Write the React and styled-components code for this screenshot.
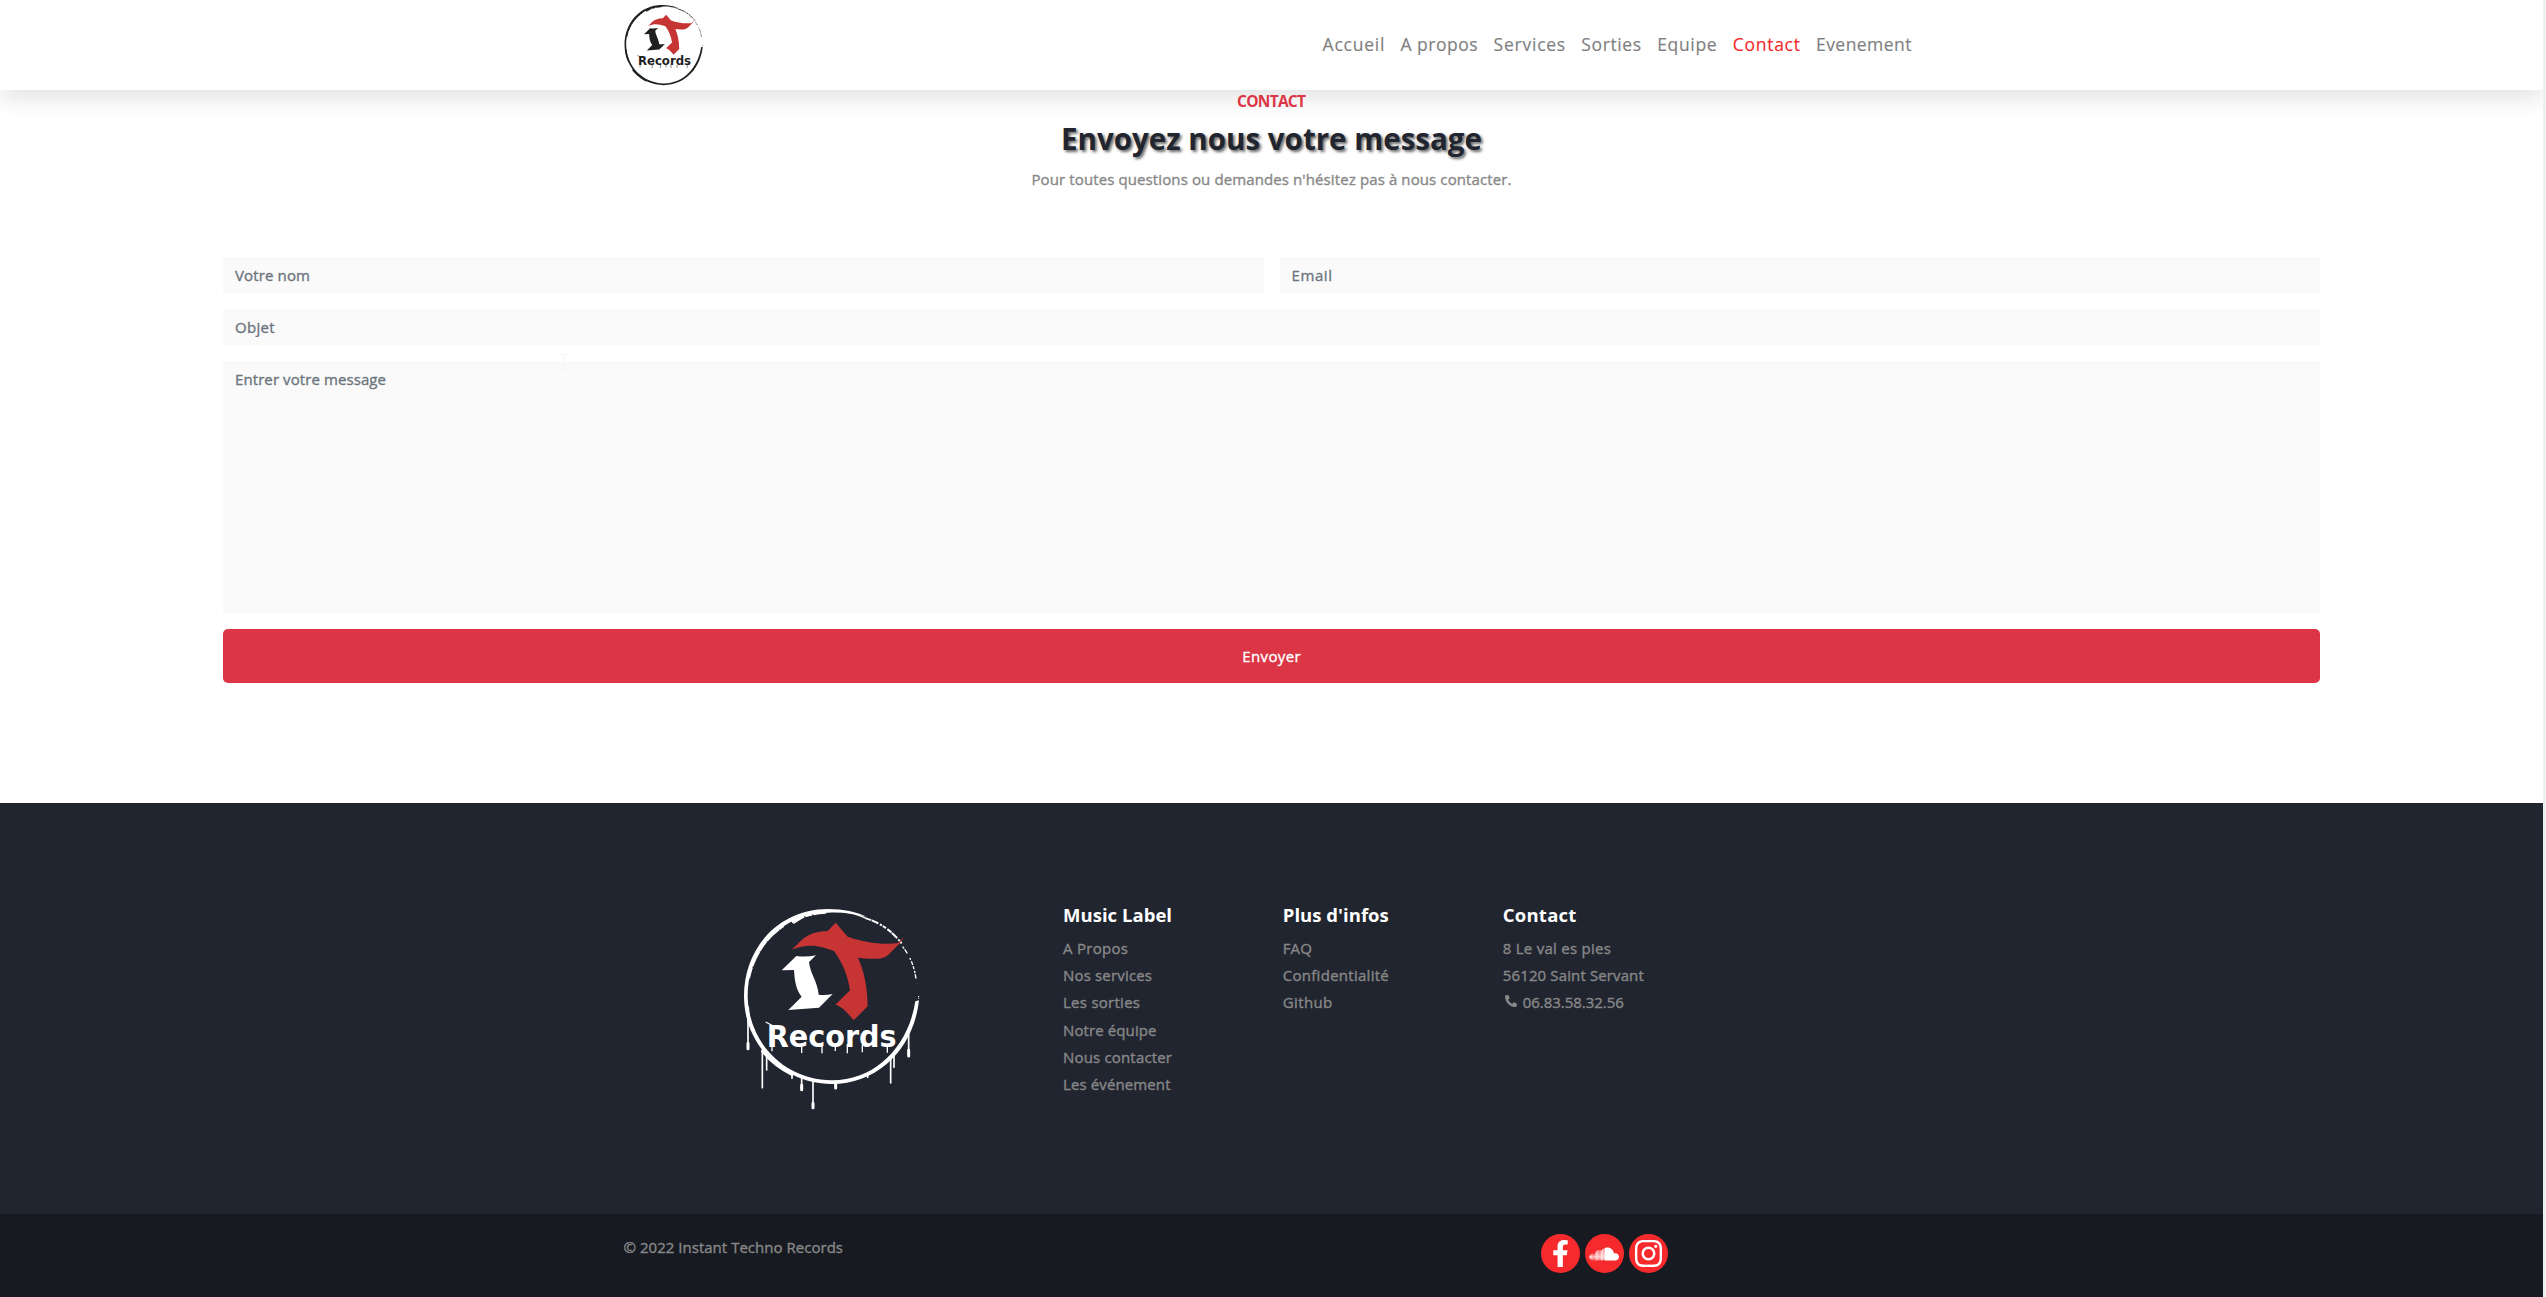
import React from 'react';
import styled, { createGlobalStyle } from 'styled-components';
import { FaFacebookF, FaSoundcloud, FaInstagram, FaPhoneAlt } from 'react-icons/fa';

const FAMILY = '"Open Sans", "Noto Sans", sans-serif';

const GlobalStyle = createGlobalStyle`
  * { box-sizing: border-box; }
  html, body { margin: 0; padding: 0; overflow: hidden; background: #fff; }
  body { font-family: ${FAMILY}; font-size: 15px; line-height: 24px; color: #212529; }
  ul, h2, h3, p { margin: 0; padding: 0; list-style: none; }
  a { color: inherit; text-decoration: none; }
`;

/* Letter spacing that makes a text run exactly as long as its design width. */
const pen = document.createElement('canvas').getContext('2d');
function tracking(text, width, size, weight = 500) {
  pen.font = `${weight} ${size}px ${FAMILY}`;
  return (width - pen.measureText(text).width) / (text.length - 1);
}

const Run = styled.span`
  font-size: ${(p) => p.$size}px;
  font-weight: ${(p) => p.$weight};
  margin-right: ${(p) => -p.$track}px;
  letter-spacing: ${(p) => p.$track}px;
  white-space: nowrap;
  -webkit-text-stroke: ${(p) => (p.$weight === 500 ? '0.35px' : p.$weight === 400 ? '0.15px' : '0')};
`;

function Text({ children, width, size = 15, weight = 500 }) {
  return (
    <Run $size={size} $weight={weight} $track={tracking(children, width, size, weight)}>
      {children}
    </Run>
  );
}

const Screen = styled.div`
  display: flex;
  width: 100%;
  height: 1297px;
  overflow: hidden;
`;
const Page = styled.div`
  flex: 1;
  display: flex;
  flex-direction: column;
`;
const ScrollTrack = styled.div`
  width: 3px;
  background: #f0f0f0;
`;
const Container = styled.div`
  width: 1296px;
  margin: 0 auto;
  display: flex;
`;

const Header = styled.header`
  height: 90px;
  background: #fff;
  box-shadow: 0 10px 20px rgba(0, 0, 0, 0.1);
  flex: none;
`;
const HeaderInner = styled(Container)`
  height: 90px;
  align-items: center;
  justify-content: space-between;
`;
const Nav = styled.nav`
  display: flex;
  padding-bottom: 2px;
`;
const NavLink = styled.a`
  padding: 0 8px;
  color: ${(p) => (p.$active ? '#f62a2d' : '#7f7f7f')};
`;

const Main = styled.main`
  height: 713px;
  padding: 0 223px;
  flex: none;
`;
const Intro = styled.div`
  display: flex;
  flex-direction: column;
  align-items: center;
  height: 167px;
`;
const Eyebrow = styled.div`
  color: #dc3545;
  height: 24px;
  line-height: 23px;
`;
const Title = styled.h2`
  margin-top: 6px;
  line-height: 38px;
  color: #212530;
  text-shadow: 2px 2px 3px rgba(0, 0, 0, 0.6);
`;
const Lead = styled.p`
  margin-top: 6px;
  color: #888;
`;
const Form = styled.form`
  display: flex;
  flex-direction: column;
  gap: 16px;
`;
const FieldRow = styled.div`
  display: flex;
  gap: 16px;
`;
const Field = styled.input`
  min-width: 0;
  width: 100%;
  height: ${(p) => (p.$area ? '252px' : '36px')};
  flex: ${(p) => (p.$area ? 'none' : '1 0 36px')};
  padding: ${(p) => (p.$area ? '6px 12px' : '0 12px')};
  border: 0;
  border-radius: 0;
  outline: none;
  resize: none;
  background: #fafafa;
  font: 500 15px/24px ${FAMILY};
  letter-spacing: ${(p) => p.$track}px;
  -webkit-text-stroke: 0.35px;
  display: block;
  &::placeholder { color: #6c757d; opacity: 1; }
`;
const Submit = styled.button`
  height: 54px;
  border: 0;
  border-radius: 5px;
  background: #dc3545;
  color: #fff;
  font-family: inherit;
`;
const Caret = styled.svg`
  position: absolute;
  left: 560px;
  top: 354px;
`;

const FooterTop = styled.footer`
  height: 411px;
  flex: none;
  background: #212530;
`;
const Columns = styled.div`
  width: 1296px;
  margin: 0 auto;
  padding-top: 87px;
  display: grid;
  grid-template-columns: 439.5px 219.8px 220px 220px;
`;
const LogoCell = styled.div`
  padding-left: 96.5px;
  height: 240px;
`;
const ColumnTitle = styled.h3`
  margin-top: 13px;
  color: #fff;
  line-height: 24px;
`;
const LinkList = styled.ul`
  margin-top: 8px;
  color: #888;
`;
const LinkItem = styled.li`
  height: 27.2px;
  line-height: 27.2px;
  display: flex;
`;
const PhoneIcon = styled(FaPhoneAlt)`
  width: 12px;
  height: 12px;
  margin: 6px 6px 0 2px;
  transform: scaleX(1);
`;

const FooterBottom = styled.div`
  flex: 1;
  background: #171a21;
`;
const BottomInner = styled(Container)`
  justify-content: space-between;
  padding-right: 252px;
`;
const Copyright = styled.p`
  padding-top: 21px;
  color: #888;
`;
const Socials = styled.div`
  display: flex;
  gap: 5px;
  padding-top: 20px;
`;
const Social = styled.a`
  width: 39px;
  height: 39px;
  border-radius: 50%;
  background: #f62a2d;
  color: #fff;
  display: flex;
  align-items: center;
  justify-content: center;
`;

const LogoWord = styled.text`
  font-family: 'DejaVu Sans', sans-serif;
  font-weight: 700;
  font-size: 92px;
`;

function Emblem({ ink }) {
  return (
    <g>
      <path d="M215 179C244 157 251 126 323 123L347 98L383 140C425 155 480 165 530 160C540 157 546 147 550 138C548 152 540 160 534 165L505 194Q490 208 465 206Q437 207 414 203C432 243 443 293 443 349L401 391C388 375 368 349 346 344L390 301C385 265 370 220 342 183C290 165 262 161 215 179Z" fill="#c63434" />
      <path d="M185 241L229 198Q259 202 288 196L267 216C270 250 293 275 296 314Q317 316 338 312L297 353L205 360L245 320C226 297 224 267 222 240Z" fill={ink} />
      <LogoWord x="140" y="470" textLength="390" lengthAdjust="spacingAndGlyphs" fill={ink}>Records</LogoWord>
      <path d="M137 396L160 408M156 468V484M245 465V489M306 465V490M346 465V483M382 462V490M427 465V487M502 468V488" stroke={ink} strokeWidth="4" fill="none" />
    </g>
  );
}

function Ring({ ink }) {
  return (
    <g fill="none" stroke={ink}>
      <path d="M597 331C582 470 480 582 335 582C190 582 72 465 72 318C72 175 175 57 325 57C370 57 410 66 440 80C400 70 365 66 325 68C185 70 83 180 83 318C85 460 195 570 335 571C465 572 565 470 586 334Z" fill={ink} stroke="none" />
      <path d="M86 265C100 195 140 140 190 108" strokeWidth="8" strokeDasharray="34 3 50 2" />
      <path d="M215 95C250 76 280 68 318 66" strokeWidth="10" strokeDasharray="40 4 22 3" />
      <path d="M220 100L246 84M370 66Q405 68 440 86" strokeWidth="4" />
      <path d="M438 85C485 100 517 125 545 160" strokeWidth="6" strokeDasharray="16 2 22 5 7 3 12 5" />
      <path d="M548 170C575 205 586 240 590 282" strokeWidth="4" strokeDasharray="7 3 14 16 6 5 12 4 9 5" />
      <path d="M596 318V328" strokeWidth="3" strokeDasharray="3 2" />
      <path d="M82 350Q84 400 102 425M126 480Q160 525 220 555" strokeWidth="10" />
    </g>
  );
}

function FooterLogo() {
  return (
    <svg width="220" height="240" viewBox="0 0 660 720">
      <Ring ink="#fff" />
      <path d="M84 385V475M127 480V593M140 490V540M245 560V600M279 570V654M347 575V595M443 552V562M512 505V579M522 495V532M566 430V498M216 550V565" stroke="#fff" strokeWidth="5" strokeLinecap="round" fill="none" />
      <path d="M84 460V476M566 480V498M279 640V653M245 585V599M347 578V594" stroke="#fff" strokeWidth="9" strokeLinecap="round" fill="none" />
      <Emblem ink="#fff" />
    </svg>
  );
}

function HeaderLogo() {
  return (
    <svg width="80" height="90" viewBox="70.5 0 240 270">
      <g transform="translate(39.9 -11.1) scale(.447 .458)"><Ring ink="#1f1f1f" /></g>
      <g transform="translate(55 4.1) scale(.409)"><Emblem ink="#1f1f1f" /></g>
    </svg>
  );
}

const NAV = [
  ['Accueil', 61.8], ['A propos', 77.2], ['Services', 71.6], ['Sorties', 59.9],
  ['Equipe', 59.5], ['Contact', 67.3], ['Evenement', 95.5],
];
const COLUMNS = [
  { title: 'Music Label', width: 109, items: [['A Propos', 65], ['Nos services', 89], ['Les sorties', 77], ['Notre équipe', 93.5], ['Nous contacter', 109], ['Les événement', 107.5]] },
  { title: "Plus d'infos", width: 106, items: [['FAQ', 29], ['Confidentialité', 106], ['Github', 49.5]] },
  { title: 'Contact', width: 73.5, items: [['8 Le val es pies', 108], ['56120 Saint Servant', 141], ['06.83.58.32.56', 101, true]] },
];

export default function App() {
  return (
    <Screen>
      <GlobalStyle />
      <Page>
        <Header>
          <HeaderInner>
            <HeaderLogo />
            <Nav>
              {NAV.map(([label, width]) => (
                <NavLink key={label} href="#" $active={label === 'Contact'}>
                  <Text width={width} size={17.5} weight={400}>{label}</Text>
                </NavLink>
              ))}
            </Nav>
          </HeaderInner>
        </Header>
        <Main>
          <Intro>
            <Eyebrow><Text width={69} size={15.5} weight={700}>CONTACT</Text></Eyebrow>
            <Title><Text width={421} size={29.5} weight={700}>Envoyez nous votre message</Text></Title>
            <Lead><Text width={480}>Pour toutes questions ou demandes n'hésitez pas à nous contacter.</Text></Lead>
          </Intro>
          <Form>
            <FieldRow>
              <Field placeholder="Votre nom" $track={tracking('Votre nom', 75, 15)} />
              <Field placeholder="Email" $track={tracking('Email', 40.5, 15)} />
            </FieldRow>
            <FieldRow>
              <Field placeholder="Objet" $track={tracking('Objet', 39.5, 15)} />
            </FieldRow>
            <Field as="textarea" $area placeholder="Entrer votre message" $track={tracking('Entrer votre message', 151, 15)} />
            <Submit type="button"><Text width={58.5}>Envoyer</Text></Submit>
          </Form>
        </Main>
        <FooterTop>
          <Columns>
            <LogoCell><FooterLogo /></LogoCell>
            {COLUMNS.map((col) => (
              <div key={col.title}>
                <ColumnTitle><Text width={col.width} size={18.5} weight={700}>{col.title}</Text></ColumnTitle>
                <LinkList>
                  {col.items.map(([label, width, phone]) => (
                    <LinkItem key={label}>
                      {phone && <PhoneIcon />}
                      <Text width={width}>{label}</Text>
                    </LinkItem>
                  ))}
                </LinkList>
              </div>
            ))}
          </Columns>
        </FooterTop>
        <FooterBottom>
          <BottomInner>
            <Copyright><Text width={219.5}>© 2022 Instant Techno Records</Text></Copyright>
            <Socials>
              <Social href="#"><FaFacebookF size={27} /></Social>
              <Social href="#"><FaSoundcloud size={30} /></Social>
              <Social href="#"><FaInstagram size={31} /></Social>
            </Socials>
          </BottomInner>
        </FooterBottom>
      </Page>
      <ScrollTrack />
      <Caret width="8" height="16" viewBox="0 0 8 16" fill="none" stroke="#f3f3f3">
        <path d="M0 .5H3M5 .5H8M0 15.5H3M5 15.5H8M4 1V15" />
      </Caret>
    </Screen>
  );
}
